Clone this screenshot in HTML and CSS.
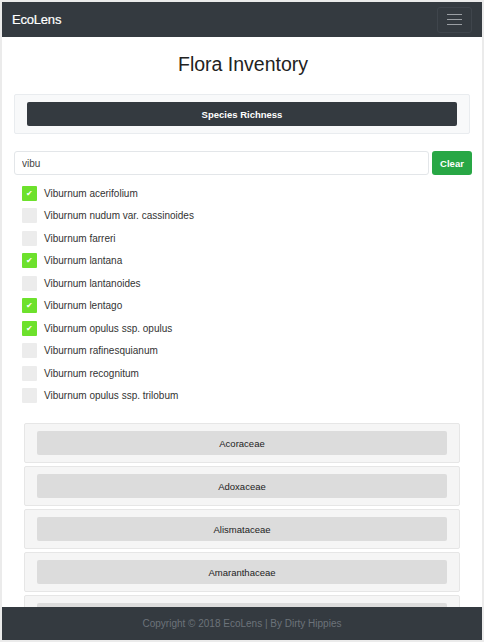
FILE: index.html
```html
<!DOCTYPE html>
<html>
<head>
<meta charset="utf-8">
<link rel="stylesheet" href="styles.css">
</head>
<body>
<div class="frame">
  <nav class="navbar">
    <span class="brand">EcoLens</span>
    <button class="toggler"><span></span><span></span><span></span></button>
  </nav>
  <main class="content">
    <h1 class="title">Flora Inventory</h1>
    <div class="card">
      <button class="btn-dark">Species Richness</button>
    </div>
    <div class="search">
      <input class="search-input" type="text" value="vibu">
      <button class="btn-clear">Clear</button>
    </div>
    <ul class="species">
      <li><span class="box checked">✔</span>Viburnum acerifolium</li>
      <li><span class="box"></span>Viburnum nudum var. cassinoides</li>
      <li><span class="box"></span>Viburnum farreri</li>
      <li><span class="box checked">✔</span>Viburnum lantana</li>
      <li><span class="box"></span>Viburnum lantanoides</li>
      <li><span class="box checked">✔</span>Viburnum lentago</li>
      <li><span class="box checked">✔</span>Viburnum opulus ssp. opulus</li>
      <li><span class="box"></span>Viburnum rafinesquianum</li>
      <li><span class="box"></span>Viburnum recognitum</li>
      <li><span class="box"></span>Viburnum opulus ssp. trilobum</li>
    </ul>
    <div class="families">
      <div class="panel"><button class="fam">Acoraceae</button></div>
      <div class="panel"><button class="fam">Adoxaceae</button></div>
      <div class="panel"><button class="fam">Alismataceae</button></div>
      <div class="panel"><button class="fam">Amaranthaceae</button></div>
      <div class="panel"><button class="fam"></button></div>
    </div>
  </main>
  <footer class="footer">Copyright © 2018 EcoLens | By Dirty Hippies</footer>
</div>
</body>
</html>
```
FILE: styles.css
```css
html, body {
  margin: 0;
  padding: 0;
  height: 100%;
  overflow: hidden;
}
body {
  background: #ebebeb;
  font-family: "Liberation Sans", Arial, sans-serif;
  color: #212529;
  padding: 2px;
  box-sizing: border-box;
}
.frame {
  height: 100%;
  background: #fff;
  overflow: hidden;
  display: flex;
  flex-direction: column;
}
.navbar {
  flex: none;
  height: 35px;
  background: #343a40;
  display: flex;
  align-items: center;
  justify-content: space-between;
  padding: 0 10px;
}
.brand {
  color: #fff;
  font-size: 13px;
  letter-spacing: -0.2px;
  -webkit-text-stroke: 0.2px #fff;
}
.toggler {
  width: 35px;
  height: 26px;
  background: transparent;
  border: 1px solid #3f454c;
  border-radius: 3px;
  display: flex;
  flex-direction: column;
  align-items: center;
  justify-content: center;
  gap: 4px;
  padding: 0;
}
.toggler span {
  display: block;
  width: 15px;
  height: 1px;
  background: #9a9ea3;
}
.content {
  flex: 1;
  min-height: 0;
  overflow: hidden;
  padding: 0 10px 0 12px;
}
.title {
  margin: 16px 0 0;
  height: 41px;
  font-size: 19.5px;
  font-weight: 400;
  text-align: center;
  color: #222;
}
.card {
  background: #f8f9fa;
  border: 1px solid #e9ecef;
  border-radius: 2px;
  padding: 7px 12px;
  margin: 0 2px 17px 0;
}
.btn-dark {
  display: block;
  width: 100%;
  height: 24px;
  background: #343a40;
  border: none;
  border-radius: 2px;
  color: #fff;
  font-family: "Liberation Sans", Arial, sans-serif;
  font-size: 9.5px;
  font-weight: 700;
}
.search {
  display: flex;
  gap: 3px;
  margin-bottom: 7px;
}
.search-input {
  flex: 1;
  height: 24px;
  box-sizing: border-box;
  border: 1px solid #e3e6e9;
  border-radius: 3px;
  padding: 0 7px;
  font-family: "Liberation Sans", Arial, sans-serif;
  font-size: 10px;
  color: #444;
}
.btn-clear {
  width: 40px;
  height: 24px;
  background: #28a745;
  border: none;
  border-radius: 3px;
  color: #fff;
  font-family: "Liberation Sans", Arial, sans-serif;
  font-size: 9.5px;
  font-weight: 700;
  padding: 0;
}
.species {
  list-style: none;
  margin: 0;
  padding: 0 0 0 8px;
}
.species li {
  height: 22.5px;
  display: flex;
  align-items: center;
  font-size: 10px;
  color: #333;
}
.box {
  width: 15px;
  height: 15px;
  background: #ececec;
  border-radius: 1px;
  margin-right: 7px;
  display: flex;
  align-items: center;
  justify-content: center;
  color: #fff;
  font-size: 8px;
}
.box.checked {
  background: #6de12c;
}
.families {
  margin: 16px 12px 0 10px;
  display: flex;
  flex-direction: column;
  gap: 3px;
}
.panel {
  background: #f5f5f5;
  border: 1px solid #e6e6e6;
  border-radius: 2px;
  padding: 7px 12px 7px;
}
.fam {
  display: block;
  width: 100%;
  height: 24px;
  background: #dcdcdc;
  border: none;
  border-radius: 2px;
  font-family: "Liberation Sans", Arial, sans-serif;
  font-size: 9.5px;
  color: #222;
}
.footer {
  flex: none;
  height: 33px;
  background: #343a40;
  color: #6c737a;
  font-size: 10px;
  display: flex;
  align-items: center;
  justify-content: center;
}
```
